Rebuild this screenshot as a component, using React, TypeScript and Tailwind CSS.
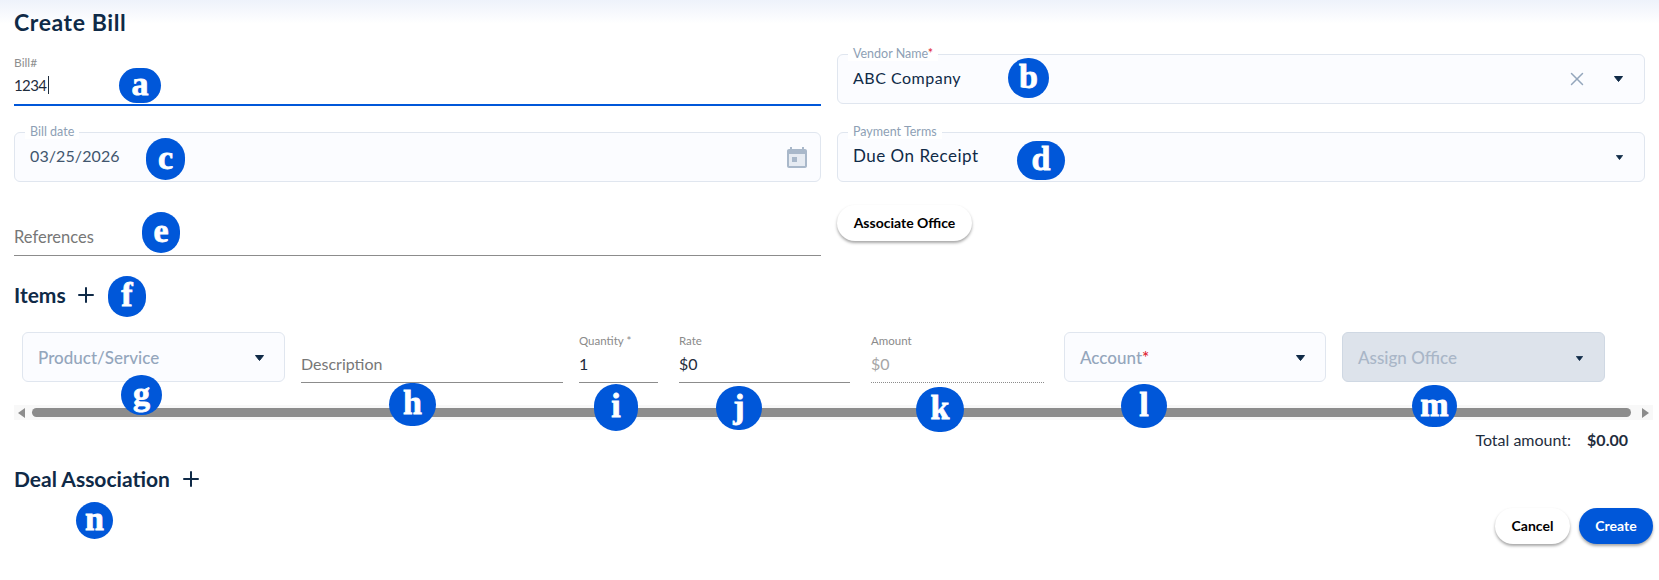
import { Plus, X } from "lucide-react";

const font = "font-['Lato','Liberation_Sans',sans-serif]";

// annotation markers sitting on top of the form
const badges = [
  { letter: "a", cls: "left-[119px] top-[68px] w-[42px] h-[35px]" },
  { letter: "b", cls: "left-[1008px] top-[58px] w-[41px] h-[40px]" },
  { letter: "c", cls: "left-[146px] top-[138px] w-[39px] h-[42px]" },
  { letter: "d", cls: "left-[1017px] top-[141px] w-[48px] h-[39px]" },
  { letter: "e", cls: "left-[142px] top-[212px] w-[38px] h-[41px]" },
  { letter: "f", cls: "left-[108px] top-[276px] w-[38px] h-[41px]" },
  { letter: "g", cls: "left-[121px] top-[375px] w-[41px] h-[40px]" },
  { letter: "h", cls: "left-[389px] top-[383px] w-[47px] h-[43px]" },
  { letter: "i", cls: "left-[594px] top-[384px] w-[44px] h-[47px]" },
  { letter: "j", cls: "left-[716px] top-[386px] w-[46px] h-[44px]" },
  { letter: "k", cls: "left-[916px] top-[387px] w-[48px] h-[45px]" },
  { letter: "l", cls: "left-[1121px] top-[384px] w-[46px] h-[44px]" },
  { letter: "m", cls: "left-[1412px] top-[385px] w-[45px] h-[42px]" },
  { letter: "n", cls: "left-[76px] top-[502px] w-[37px] h-[37px]" },
];

const Caret = ({ small }: { small?: boolean }) => (
  <svg width={small ? 7 : 9} height={small ? 5 : 6} viewBox="0 0 9 6" preserveAspectRatio="none" className="shrink-0">
    <path d="M0.5 0.5h8L4.500 5.500z" fill="#0f2a47" stroke="#0f2a47" strokeLinejoin="round" />
  </svg>
);

const CalendarIcon = () => (
  <svg width="20" height="21" viewBox="0 0 20 21" className="shrink-0">
    <path
      fill="#a9b8ca"
      d="M3 0h2v2h10V0h2v2h1c1.100 0 2 .9 2 2v15c0 1.100-.9 2-2 2H2c-1.100 0-2-.9-2-2V4c0-1.100.9-2 2-2h1V0z"
    />
    <rect x="2" y="7" width="16" height="12" fill="#e6ebf2" />
    <rect x="5" y="10" width="5" height="5" fill="#a9b8ca" />
  </svg>
);

const OutlinedField = ({
  label,
  required,
  value,
  children,
  valueCls = "text-[#0f2a47] text-[16px] tracking-[0.5px]",
  right = "pr-[21px]",
}: {
  label: string;
  required?: boolean;
  value: string;
  children?: React.ReactNode;
  valueCls?: string;
  right?: string;
}) => (
  <div className={`relative flex h-[50px] items-center rounded-md border border-[#e0e6ef] bg-[#fbfcff] pl-[15px] ${right}`}>
    <span className="absolute -top-[8px] left-[10px] bg-white px-[5px] text-[12.5px] leading-[14px] text-[#8e9fb5]">
      {label}
      {required && <span className="text-[#e0242f]">*</span>}
    </span>
    <span className={`mb-[2px] flex-1 ${valueCls}`}>{value}</span>
    {children}
  </div>
);

const SelectBox = ({
  label,
  required,
  disabled,
  width,
}: {
  label: string;
  required?: boolean;
  disabled?: boolean;
  width: string;
}) => (
  <div
    className={`mb-px flex h-[50px] items-center rounded-md border pl-[15px] pt-[2px] ${width} ${
      disabled ? "border-[#cfd8e3] bg-[#dde3eb] pr-[21px]" : "border-[#e0e6ef] bg-[#fbfcff] pr-[20px]"
    }`}
  >
    <span className={`flex-1 text-[17px] font-medium ${disabled ? "text-[#a9b6c7]" : "text-[#94a6bc]"}`}>
      {label}
      {required && <span className="text-[#e0242f]">*</span>}
    </span>
    <Caret small={disabled} />
  </div>
);

const LineField = ({
  label,
  value,
  placeholder,
  width,
  dotted,
}: {
  label?: string;
  value?: string;
  placeholder?: string;
  width: string;
  dotted?: boolean;
}) => (
  <div className={`flex h-[51px] flex-col justify-end ${width}`}>
    {label && <span className="mb-[6px] text-[11.500px] leading-[14px] text-[#8a8a8a]">{label}</span>}
    <div
      className={`flex h-[29px] items-center pb-[8px] text-[16px] ${
        dotted ? "border-b border-dotted border-[#8c8c8c] text-[#a6a6a6]" : "border-b border-[#8c8c8c]"
      } ${value && !dotted ? "text-[#1f2d3d]" : ""} ${placeholder ? "text-[#777]" : ""}`}
    >
      {value ?? placeholder}
    </div>
  </div>
);

const Heading = ({ title, gap }: { title: string; gap: string }) => (
  <div className={`flex items-center text-[#0f2a47] ${gap}`}>
    <h2 className="text-[21px] font-bold leading-[24px]">{title}</h2>
    <Plus size={24} strokeWidth={2} />
  </div>
);

export default function App() {
  return (
    <div className={`relative h-[580px] overflow-hidden bg-white ${font}`}>
      <div className="bg-gradient-to-b from-[#eef2fb] to-white to-[24px] px-[14px]">
        <h1 className="h-[54px] pt-[8px] text-[23px] font-bold leading-[28px] tracking-[0.6px] text-[#0f2a47]">Create Bill</h1>

        <div className="grid grid-cols-[807px_808px] gap-x-4">
          {/* left column */}
          <div className="flex flex-col">
            <div className="flex h-[52px] flex-col justify-end border-b-2 border-[#0057d9]">
              <span className="text-[12px] leading-[14px] text-[#8f8f8f]">Bill#</span>
              <div className="mb-[8px] mt-[4px] flex h-[22px] items-center text-[15px] tracking-[-0.6px] text-[#1f2d3d]">
                1234<span className="ml-[2px] h-[18px] w-px bg-[#1f2d3d]" />
              </div>
            </div>
            <div className="mt-[26px]">
              <OutlinedField label="Bill date" value="03/25/2026" valueCls="text-[#41566e] text-[16px] tracking-[0.1px]" right="pr-[13px]">
                <CalendarIcon />
              </OutlinedField>
            </div>
            <div className="mt-[45px] flex h-[29px] items-center border-b border-[#8c8c8c] pb-[8px] text-[16.500px] text-[#777]">
              References
            </div>
          </div>

          {/* right column */}
          <div className="flex flex-col">
            <div className="h-[50px]">
              <OutlinedField label="Vendor Name" required value="ABC Company">
                <X size={22} strokeWidth={1.600} className="mr-[26px] text-[#94a6bc]" />
                <Caret />
              </OutlinedField>
            </div>
            <div className="mt-[28px]">
              <OutlinedField label="Payment Terms" value="Due On Receipt" valueCls="mb-[3px] text-[#0f2a47] text-[17px] tracking-[0.5px]">
                <Caret small />
              </OutlinedField>
            </div>
            <button className="mt-[23px] h-[36px] w-[135px] rounded-[18px] bg-white pb-[2px] text-[14px] font-bold text-black shadow-[0_2px_3px_rgba(0,0,0,0.35)]">
              Associate Office
            </button>
          </div>
        </div>

        <div className="mt-[27px]">
          <Heading title="Items" gap="gap-[8px]" />
        </div>

        <div className="ml-2 mt-[25px] flex items-end">
          <SelectBox label="Product/Service" width="w-[263px]" />
          <div className="ml-4">
            <LineField placeholder="Description" width="w-[262px]" />
          </div>
          <div className="ml-4">
            <LineField label="Quantity *" value="1" width="w-[79px]" />
          </div>
          <div className="ml-[21px]">
            <LineField label="Rate" value="$0" width="w-[171px]" />
          </div>
          <div className="ml-[21px]">
            <LineField label="Amount" value="$0" width="w-[173px]" dotted />
          </div>
          <div className="ml-[20px]">
            <SelectBox label="Account" required width="w-[262px]" />
          </div>
          <div className="ml-4">
            <SelectBox label="Assign Office" disabled width="w-[263px]" />
          </div>
        </div>

        {/* horizontal scroll bar */}
        <div className="-mr-2 mt-[22px] flex h-[15px] items-center bg-[#f8f8f8] px-[4px]">
          <span className="h-0 w-0 border-y-[5px] border-r-[7px] border-y-transparent border-r-[#8c8c8c]" />
          <div className="ml-[7px] h-[9px] flex-1 rounded-full bg-[#8c8c8c]" />
          <span className="ml-[11px] h-0 w-0 border-y-[5px] border-l-[7px] border-y-transparent border-l-[#8c8c8c]" />
        </div>

        <div className="mt-[10px] flex justify-end pr-[17px] text-[16px] leading-[20px] text-[#1f2d3d]">
          <span>Total amount:</span>
          <span className="ml-[16px] font-bold">$0.00</span>
        </div>

        <div className="mt-[17px]">
          <Heading title="Deal Association" gap="gap-[9px]" />
        </div>

        <div className="-mr-2 mt-[17px] flex justify-end gap-[9px]">
          <button className="h-[36px] w-[75px] rounded-[18px] bg-white pb-px text-[14px] font-bold text-black shadow-[0_2px_3px_rgba(0,0,0,0.35)]">
            Cancel
          </button>
          <button className="h-[36px] w-[74px] rounded-[18px] bg-[#0057d9] pb-px text-[14px] font-bold text-white shadow-[0_2px_3px_rgba(0,0,0,0.35)]">
            Create
          </button>
        </div>
      </div>

      {badges.map((b) => (
        <span
          key={b.letter}
          className={`absolute flex items-center justify-center rounded-full bg-[#0057d9] pb-[3px] font-['Liberation_Serif',serif] text-[34px] font-bold leading-none text-white [-webkit-text-stroke:0.8px_white] ${b.cls}`}
        >
          {b.letter}
        </span>
      ))}
    </div>
  );
}
